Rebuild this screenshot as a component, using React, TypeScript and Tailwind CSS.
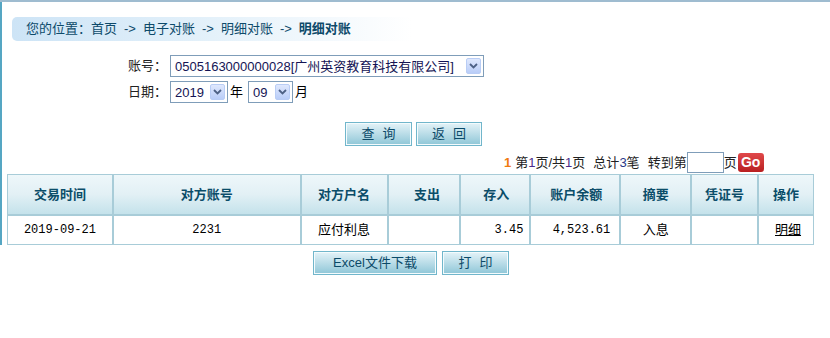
import React from "react";

const F = { fontFamily: '"Liberation Sans", Arial, "Noto Sans CJK SC", sans-serif' };
const MONO = { fontFamily: '"Liberation Mono", "DejaVu Sans Mono", "Noto Sans CJK SC", monospace' };

function Arrow() {
  return (
    <div className="flex h-full w-[15px] items-center justify-center rounded-[2px] border border-[#b9cdf5] bg-gradient-to-b from-[#dfe8fd] to-[#b9cdf8]">
      <svg width="9" height="6" viewBox="0 0 9 6">
        <path d="M1 1 L4.5 4.5 L8 1" fill="none" stroke="#4d6185" strokeWidth="1.8" />
      </svg>
    </div>
  );
}

function Sel({ w, text }: { w: string; text: React.ReactNode }) {
  return (
    <div className={`flex h-[22px] items-center border border-[#7f9db9] bg-white pl-[4px] pr-[2px] py-[2px] ${w}`}>
      <div className="flex-1 whitespace-nowrap text-[13px] leading-none text-[#141454]">{text}</div>
      <Arrow />
    </div>
  );
}

function Btn({ children, w }: { children: React.ReactNode; w: string }) {
  return (
    <div
      className={`flex h-[24px] items-center justify-center border border-[#71b6cb] bg-gradient-to-b from-[#e4f3f8] to-[#8ec6d7] shadow-[inset_0_0_0_1px_#f4fbfd] text-[13px] text-[#0b4a68] ${w}`}
    >
      {children}
    </div>
  );
}

const cols = [107, 188, 87, 73, 70, 90, 71, 67, 54];

export default function App() {
  const headers: { t: string; cls: string }[] = [
    { t: "交易时间", cls: "justify-center" },
    { t: "对方账号", cls: "justify-center" },
    { t: "对方户名", cls: "justify-center" },
    { t: "支出", cls: "justify-center pl-[6px]" },
    { t: "存入", cls: "justify-end pr-[20px]" },
    { t: "账户余额", cls: "justify-end pr-[17px]" },
    { t: "摘要", cls: "justify-center" },
    { t: "凭证号", cls: "justify-center" },
    { t: "操作", cls: "justify-center" },
  ];
  const row: { t: React.ReactNode; cls: string; mono?: boolean }[] = [
    { t: "2019-09-21", cls: "justify-center", mono: true },
    { t: "2231", cls: "justify-center", mono: true },
    { t: "应付利息", cls: "justify-center text-[13px]" },
    { t: "", cls: "" },
    { t: "3.45", cls: "justify-end pr-[6px]", mono: true },
    { t: "4,523.61", cls: "justify-end pr-[9px]", mono: true },
    { t: "入息", cls: "justify-center text-[13px]" },
    { t: "", cls: "" },
    { t: <span className="underline">明细</span>, cls: "justify-center pl-[4px] text-[13px]" },
  ];
  return (
    <div className="h-[338px] w-[830px] bg-white text-[12px] text-black" style={F}>
      <div className="h-[2px] w-full bg-[#9fbcd0]" />
      <div className="w-full border-l-2 border-[#55a6c3]">
        <div className="pt-[15px] pl-[10px]">
          <div className="flex h-[24px] w-[400px] items-center rounded-l-[5px] bg-gradient-to-r from-[#cde4f6] via-[#e4f1fa] to-white pl-[14px] text-[13px] text-[#0d4a6a]">
            <span>您的位置：首页</span>
            <span className="mx-[7px]">-&gt;</span>
            <span>电子对账</span>
            <span className="mx-[7px]">-&gt;</span>
            <span>明细对账</span>
            <span className="mx-[7px]">-&gt;</span>
            <span className="font-bold">明细对账</span>
          </div>
        </div>
        <div className="mt-[14px] flex items-center pl-[126px]">
          <span className="w-[42px] text-[13px] text-[#222]">账号：</span>
          <Sel w="w-[314px]" text={<span>0505163000000028[广州英资教育科技有限公司]</span>} />
        </div>
        <div className="mt-[4px] flex items-center pl-[126px]">
          <span className="w-[42px] text-[13px] text-[#222]">日期：</span>
          <Sel w="w-[58px]" text="2019" />
          <span className="ml-[2px] w-[18px] text-[13px]">年</span>
          <Sel w="w-[45px]" text="09" />
          <span className="ml-[2px] text-[13px]">月</span>
        </div>
        <div className="mt-[19px] flex gap-[4px] pl-[343px]">
          <Btn w="w-[67px]">
            <span className="tracking-[8px] pl-[8px]">查询</span>
          </Btn>
          <Btn w="w-[66px]">
            <span className="tracking-[8px] pl-[8px]">返回</span>
          </Btn>
        </div>
        <div className="mt-[6px] flex h-[21px] items-center pl-[502px] text-[13px] text-[#222]">
          <span className="font-bold text-[#f07a10]">1</span>
          <span className="ml-[4px]">第</span>
          <span className="text-[#4a2a8a]">1</span>
          <span>页/共</span>
          <span className="text-[#4a2a8a]">1</span>
          <span>页</span>
          <span className="ml-[8px]">总计</span>
          <span className="text-[#2a3a8a]">3</span>
          <span>笔</span>
          <span className="ml-[8px]">转到第</span>
          <div className="h-[21px] w-[37px] border border-[#7f9db9] bg-white" />
          <span>页</span>
          <div className="ml-[1px] flex h-[19px] w-[26px] items-center justify-center rounded-[3px] bg-gradient-to-b from-[#e0484a] to-[#b81e20] text-[14px] font-bold text-white" style={{ fontFamily: '"Liberation Sans", Arial, sans-serif' }}>
            Go
          </div>
        </div>
        <div className="mt-[1px] ml-[5px] w-[807px] border border-[#a8ccd8]">
          <div className="flex h-[41px] border-b-2 border-[#a8ccd8] bg-gradient-to-b from-[#eef7fa] via-[#e2f0f5] to-[#c4e2eb]">
            {headers.map((h, i) => (
              <div
                key={i}
                className={`flex items-center text-[13px] font-bold text-[#0b4d69] ${h.cls} ${i < 8 ? "border-r-2 border-[#a8ccd8]" : ""}`}
                style={{ width: cols[i] - (i === 0 ? 1 : 0) }}
              >
                {h.t}
              </div>
            ))}
          </div>
          <div className="flex h-[28px]">
            {row.map((c, i) => (
              <div
                key={i}
                className={`flex items-center text-[12px] text-black ${c.cls} ${i < 8 ? "border-r-2 border-[#a8ccd8]" : ""}`}
                style={{ width: cols[i] - (i === 0 ? 1 : 0), ...(c.mono ? MONO : {}) }}
              >
                {c.t}
              </div>
            ))}
          </div>
        </div>
      </div>
      <div className="mt-[6px] flex gap-[5px] pl-[313px]">
        <Btn w="w-[124px]">
          <span>Excel文件下载</span>
        </Btn>
        <Btn w="w-[67px]">
          <span className="tracking-[8px] pl-[8px]">打印</span>
        </Btn>
      </div>
    </div>
  );
}
